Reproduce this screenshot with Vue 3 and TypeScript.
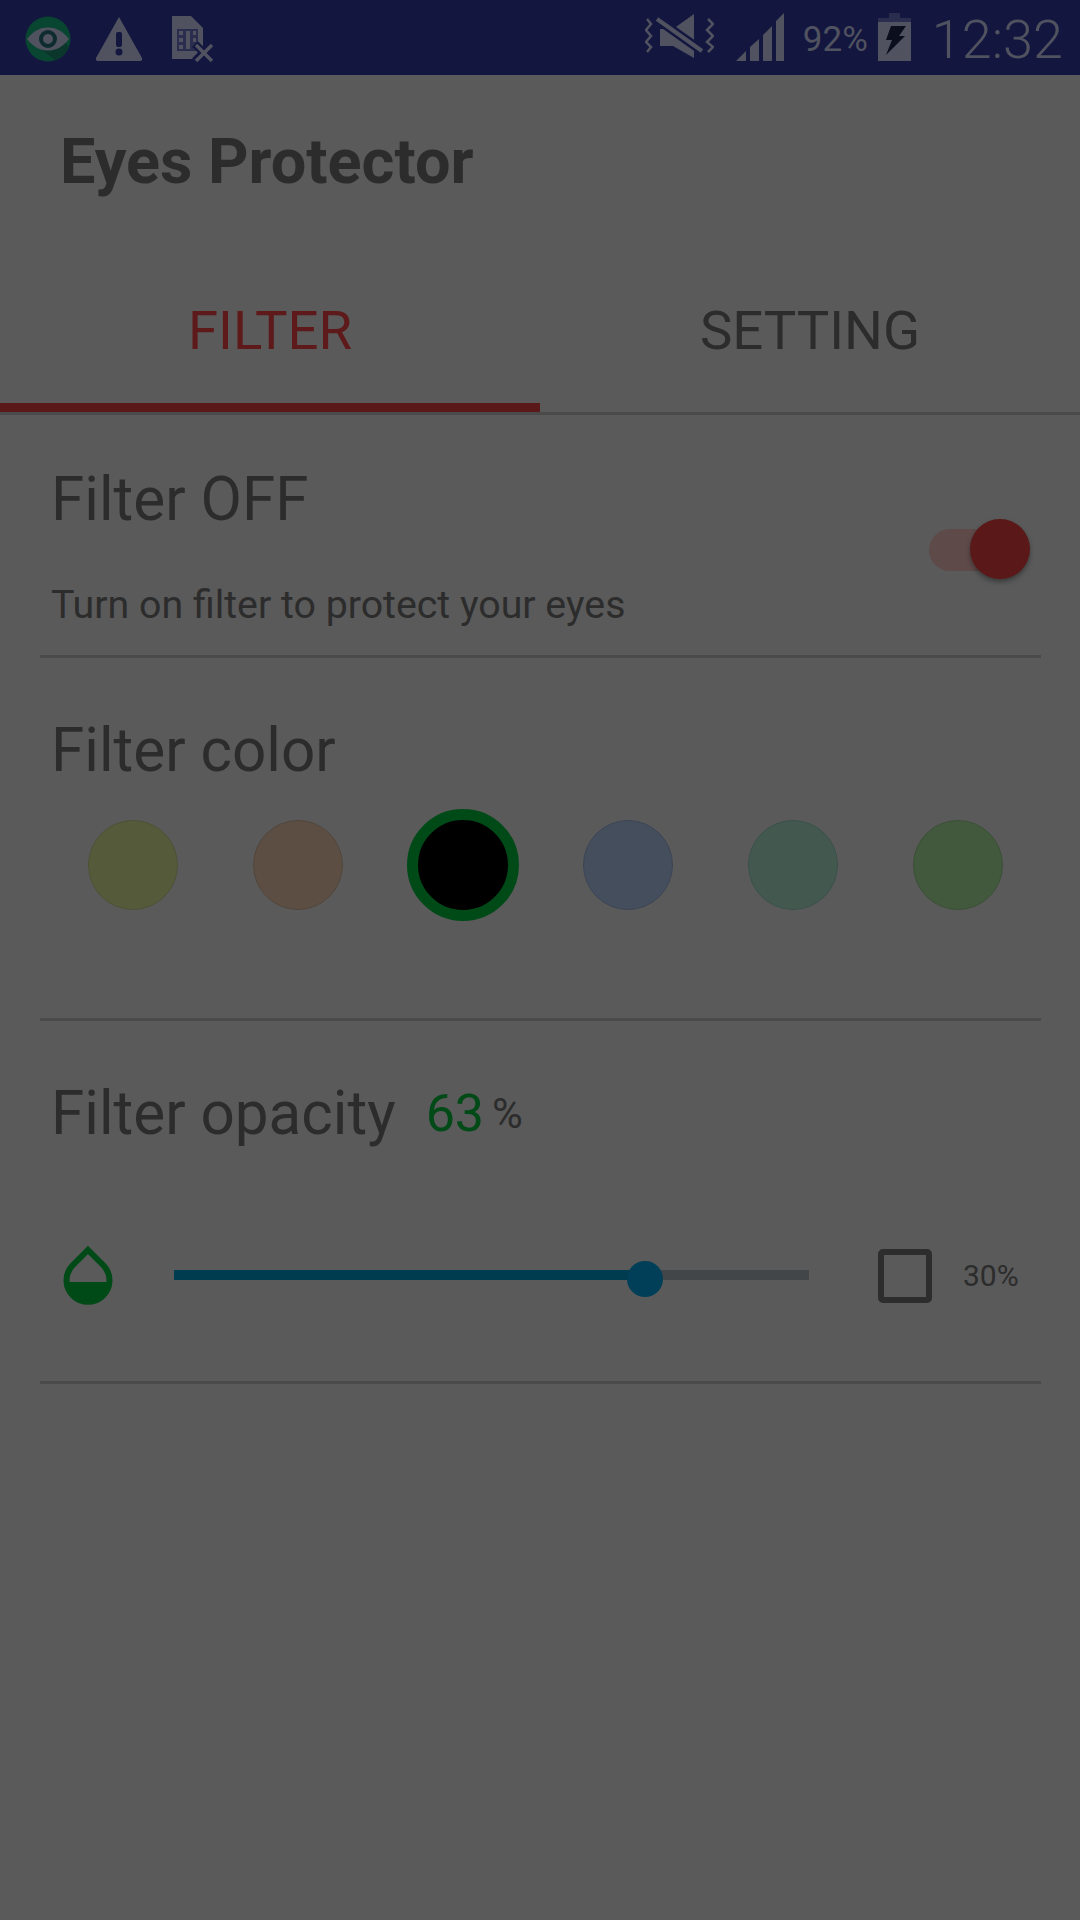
<script setup lang="ts">
const swatches = [
  { color: '#545a3a', border: '#4c5236' },
  { color: '#5c4e43', border: '#52463c' },
  { color: '#000000', border: '#004a18', selected: true },
  { color: '#454e5d', border: '#3c4555' },
  { color: '#43594f', border: '#3a514b' },
  { color: '#43593e', border: '#3a5036' },
]
</script>

<template>
  <div class="screen">
    <div class="status-bar">
      <div class="status-left">
        <svg class="ic-eye" viewBox="0 0 46 46">
          <circle cx="23" cy="23" r="22.5" fill="#094632" />
          <path d="M23 32 L12 30 L30 44 A22.5 22.5 0 0 0 44 31 L33 21 Z" fill="#0b362b" />
          <path d="M2 23 C9 14 16 11.500 23 11.500 C30 11.500 37 14 44 23 C37 32 30 34.500 23 34.500 C16 34.500 9 32 2 23 Z" fill="#50525f" />
          <circle cx="23" cy="23" r="7" fill="none" stroke="#0e2c30" stroke-width="4" />
        </svg>
        <svg class="ic-warn" viewBox="0 0 46 44">
          <path d="M23 0 L46 41 Q46.500 44 44 44 L2 44 Q-0.500 44 0 41 Z" fill="#50525f" />
          <rect x="20" y="15" width="6" height="15" rx="2" fill="#131740" />
          <circle cx="23" cy="35" r="3.500" fill="#131740" />
        </svg>
        <svg class="ic-sim" viewBox="0 0 43 46">
          <path d="M1 0 L20 0 L32 12 L32 43 L1 43 Z" fill="#50525f" />
          <path d="M6 13 H27 V35 H6 Z" fill="#2a2d4d" />
          <path d="M8 15 H12 V19 H8 Z M8 22 H12 V26 H8 Z M8 29 H12 V33 H8 Z M15 15 H19 V33 H15 Z M22 15 H25 V19 H22 Z M22 22 H25 V26 H22 Z" fill="#50525f" />
          <path d="M24 28 L41 45 M41 28 L24 45" stroke="#131740" stroke-width="8" />
          <path d="M25 29 L41 45 M41 29 L25 45" stroke="#50525f" stroke-width="3.500" />
        </svg>
      </div>
      <div class="status-right">
        <svg class="ic-vib" viewBox="0 0 69 46">
          <path d="M2 5 L6 10 L1 16 L6 22 L1 28 L6 33 L2 38 M63 5 L68 10 L62 16 L68 22 L62 28 L68 33 L63 38" fill="none" stroke="#50525f" stroke-width="2.500" />
          <path d="M15 15 L28 15 L49 0 L49 44 L28 32 L15 32 Z" fill="#50525f" />
          <path d="M12 5 L57 37" stroke="#131740" stroke-width="9" />
          <path d="M12 5 L57 37" stroke="#50525f" stroke-width="4" />
        </svg>
        <svg class="ic-signal" viewBox="0 0 48 48">
          <path d="M0 48 L10 38 V48 Z M14 34 L23 26 V48 H14 Z M27 22 L36 13 V48 H27 Z M40 8 L48 0 V48 H40 Z" fill="#50525f" />
        </svg>
        <span class="pct">92%</span>
        <svg class="ic-batt" viewBox="0 0 33 48">
          <path d="M11 0 H22 V5 H11 Z" fill="#2a2d4d" />
          <path d="M0 5 H33 V9 H0 Z" fill="#2a2d4d" />
          <path d="M0 9 H33 V48 H0 Z" fill="#50525f" />
          <path d="M13 13 H28 L21 23 H27 L8 42 L14 27 H8 Z" fill="#0b0e1c" />
        </svg>
        <span class="clock">12:32</span>
      </div>
    </div>

    <header class="app-title">Eyes Protector</header>

    <nav class="tabs">
      <div class="tab active">FILTER</div>
      <div class="tab">SETTING</div>
    </nav>

    <section class="panel panel-toggle">
      <div class="toggle-text">
        <div class="heading">Filter OFF</div>
        <div class="sub">Turn on filter to protect your eyes</div>
      </div>
      <div class="switch">
        <div class="switch-track"></div>
        <div class="switch-thumb"></div>
      </div>
    </section>

    <section class="panel panel-color">
      <div class="heading">Filter color</div>
      <div class="swatches">
        <div v-for="(s, i) in swatches" :key="i" class="swatch-cell">
          <div
            class="swatch"
            :class="{ selected: s.selected }"
            :style="{ backgroundColor: s.color, borderColor: s.border }"
          ></div>
        </div>
      </div>
    </section>

    <section class="panel panel-opacity">
      <div class="opacity-head">
        <span class="heading">Filter opacity</span>
        <span class="value">63</span>
        <span class="unit">%</span>
      </div>
      <div class="slider-row">
        <svg class="ic-drop" viewBox="0 0 50 61">
          <path d="M25 4 L41 20 A21.500 21.500 0 1 1 9 20 Z" fill="none" stroke="#004a18" stroke-width="6" />
          <path d="M6.500 37 H43.500 A18.500 18.500 0 0 1 6.500 37 Z" fill="#004a18" stroke="#004a18" stroke-width="2" />
        </svg>
        <div class="slider">
          <div class="slider-fill"></div>
          <div class="slider-thumb"></div>
        </div>
        <div class="checkbox"></div>
        <span class="check-label">30%</span>
      </div>
    </section>
  </div>
</template>

<style scoped>
.screen {
  width: 1080px;
  height: 1920px;
  background: #5a5a5a;
  font-family: Roboto, "Liberation Sans", sans-serif;
  color: #2c2c2c;
  overflow: hidden;
}

.status-bar {
  height: 75px;
  background: #131740;
  display: flex;
  justify-content: space-between;
  align-items: center;
  padding: 0 17px 0 25px;
  box-sizing: border-box;
}
.status-left,
.status-right {
  display: flex;
  align-items: center;
}
.ic-eye { width: 46px; height: 46px; margin-top: 2px; }
.ic-warn { width: 46px; height: 44px; margin-left: 25px; margin-top: 2px; }
.ic-sim { width: 43px; height: 46px; margin-left: 29px; margin-top: 2px; }
.ic-vib { width: 69px; height: 46px; margin-top: -1px; }
.ic-signal { width: 48px; height: 48px; margin-left: 22px; margin-top: -1px; }
.pct {
  font-size: 35px;
  color: #50525f;
  margin-left: 19px;
  width: 75px;
  padding-top: 3px;
}
.ic-batt { width: 33px; height: 48px; margin-top: -2px; }
.clock {
  font-size: 54px;
  font-weight: 300;
  color: #50525f;
  margin-left: 21px;
  padding-top: 3px;
}

.app-title {
  height: 140px;
  box-sizing: border-box;
  padding: 0 0 0 60px;
  font-size: 63px;
  font-weight: 700;
  line-height: 173px;
}

.tabs {
  display: flex;
  height: 200px;
  box-sizing: border-box;
  border-bottom: 3px solid #4a4a4a;
}
.tab {
  flex: 1;
  font-size: 54.5px;
  text-align: center;
  line-height: 231px;
  height: 197px;
  box-sizing: border-box;
}
.tab.active {
  color: #5e1a1a;
  border-bottom: 9px solid #5a1818;
}

.panel {
  margin: 0 39px 0 40px;
  border-bottom: 3px solid #4a4a4a;
  box-sizing: border-box;
}
.heading {
  font-size: 60.2px;
  line-height: 70px;
}

.panel-toggle {
  height: 243px;
  padding-left: 11px;
  display: flex;
  justify-content: space-between;
}
.toggle-text { padding-top: 50px; }
.sub {
  font-size: 39.3px;
  line-height: 44px;
  margin-top: 48px;
}
.switch {
  position: relative;
  width: 101px;
  height: 60px;
  margin: 104px 11px 0 0;
}
.switch-track {
  position: absolute;
  left: 0;
  top: 10px;
  width: 92px;
  height: 42px;
  border-radius: 21px;
  background: #5f4a4a;
}
.switch-thumb {
  position: absolute;
  right: 0;
  top: 0;
  width: 60px;
  height: 60px;
  border-radius: 50%;
  background: #5a1818;
  box-shadow: 0 3px 5px rgba(0, 0, 0, 0.35);
}

.panel-color {
  height: 363px;
  padding: 58px 11px 0;
}
.swatches {
  display: flex;
  margin: 23px 0 0 -1px;
  width: 990px;
}
.swatch-cell {
  width: 165px;
  height: 112px;
  display: flex;
  align-items: center;
  justify-content: center;
}
.swatch {
  width: 90px;
  height: 90px;
  border-radius: 50%;
  border: 1px solid;
  box-sizing: border-box;
}
.swatch.selected {
  width: 112px;
  height: 112px;
  border-width: 11px;
}

.panel-opacity {
  height: 363px;
  padding: 58px 11px 0;
}
.opacity-head {
  display: flex;
  align-items: flex-start;
}
.value {
  font-size: 52px;
  line-height: 70px;
  color: #004a18;
  margin-left: 30px;
}
.unit {
  font-size: 42px;
  line-height: 70px;
  margin-left: 8px;
}
.slider-row {
  display: flex;
  align-items: center;
  margin-top: 96px;
  height: 61px;
}
.ic-drop { width: 50px; height: 61px; margin: 2px 0 0 12px; }
.slider {
  position: relative;
  width: 635px;
  height: 10px;
  background: #434649;
  margin: -2px 0 0 61px;
}
.slider-fill {
  width: 471px;
  height: 100%;
  background: #003c50;
}
.slider-thumb {
  position: absolute;
  left: 453px;
  top: -9px;
  width: 36px;
  height: 36px;
  border-radius: 50%;
  background: #003f57;
}
.checkbox {
  width: 54px;
  height: 54px;
  box-sizing: border-box;
  border: 6px solid #2d2d2d;
  border-radius: 5px;
  margin-left: 69px;
}
.check-label {
  font-size: 30px;
  margin-left: 31px;
}
</style>
